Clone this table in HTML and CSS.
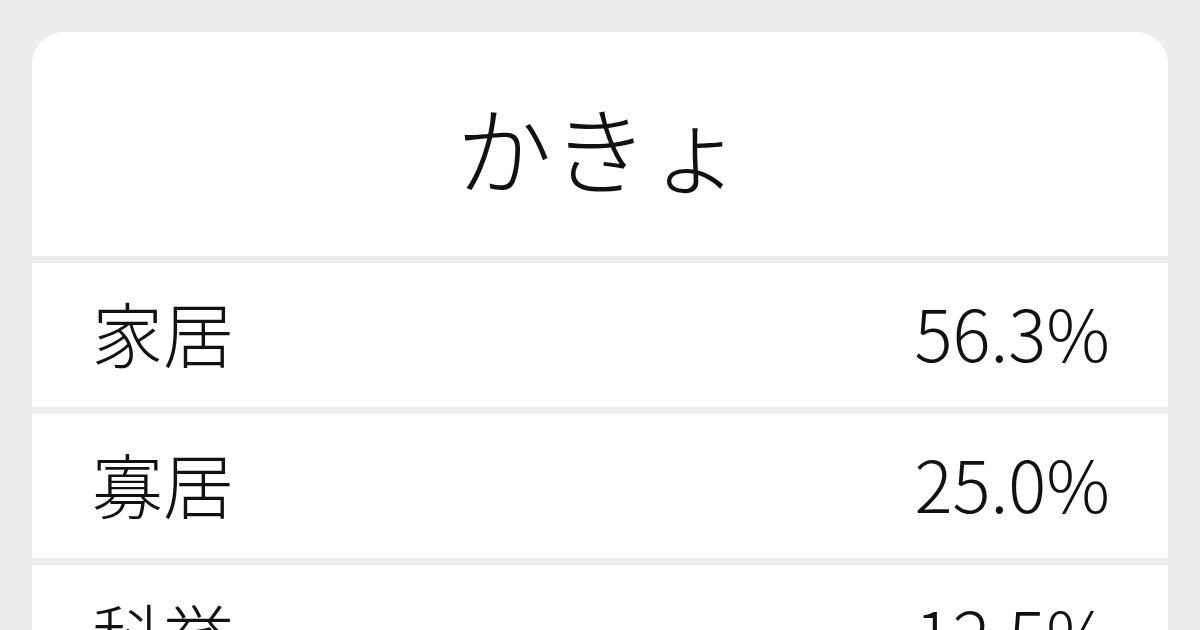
FILE: index.html
```html
<!DOCTYPE html>
<html lang="ja">
<head>
<meta charset="utf-8">
<title>かきょ</title>
<link rel="stylesheet" href="styles.css">
</head>
<body>
<main class="card">
  <header class="head"><h1 class="title">かきょ</h1></header>
  <div class="row"><span class="word">家居</span><span class="pct">56.3%</span></div>
  <div class="row"><span class="word">寡居</span><span class="pct">25.0%</span></div>
  <div class="row"><span class="word">科挙</span><span class="pct">12.5%</span></div>
</main>
</body>
</html>
```
FILE: styles.css
```css
html, body {
  margin: 0;
  padding: 0;
}
body {
  width: 1200px;
  height: 630px;
  overflow: hidden;
  background: #ededed;
  font-family: "Noto Sans CJK JP", "Noto Sans", sans-serif;
  font-weight: 300;
  color: #111111;
}
.card {
  margin: 32px 32px 0;
  display: flex;
  flex-direction: column;
  gap: 7px;
  border-radius: 32px 32px 0 0;
  overflow: hidden;
}
.head {
  height: 224px;
  background: #ffffff;
  display: flex;
  align-items: center;
  justify-content: center;
}
.title {
  margin: 0;
  font-size: 96px;
  font-weight: 300;
  line-height: 1;
  padding-top: 4px;
}
.row {
  height: 144px;
  flex: none;
  box-sizing: border-box;
  background: #ffffff;
  display: flex;
  align-items: center;
  justify-content: space-between;
  padding: 0 58px 8px 60px;
  font-size: 71px;
  line-height: 1;
}
```
